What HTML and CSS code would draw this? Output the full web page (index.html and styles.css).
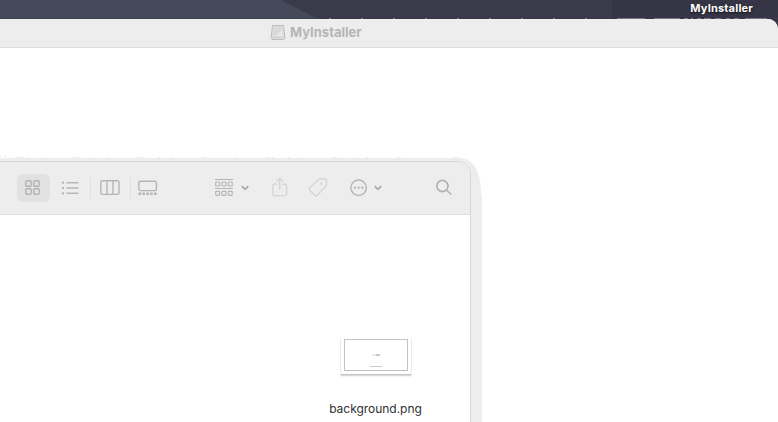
FILE: index.html
```html
<!DOCTYPE html>
<html lang="en">
<head>
<meta charset="utf-8">
<title>MyInstaller</title>
<link rel="stylesheet" href="styles.css">
</head>
<body>
<div class="desktop">
  <header class="menubar">
    <svg class="wallpaper" width="778" height="30" viewBox="0 0 778 30">
      <path d="M0 0H281L318 19V30H0Z" fill="#454a5b"/>
      <path d="M612 0H778V30H620L612 19Z" fill="#353546"/>
      <path d="M0 18.5H315" stroke="#3e4051"/>
      <path d="M329 18.5h2m30 0h2m30 0h2m30 0h2m30 0h2m30 0h2m30 0h2m30 0h2m30 0h2m30 0h28m9 0h26m4 0h4m3 0h2m4 0h4m3 0h7m4 0h6m5 0h4m4 0h5m6 0h22" stroke="#777784"/>
    </svg>
    <span class="disk-label">MyInstaller</span>
  </header>
  <main class="window">
    <div class="titlebar">
      <svg width="16" height="17" viewBox="0 0 16 17">
        <path d="M2.5 1.5H13.5L15 14.5 14 15.5H2L1 14.5Z" fill="#dedede" stroke="#bdbdbd"/>
        <path d="M3.5 2.5H12.5L13 12H3Z" fill="#d9d9d9"/>
        <path d="M6 12L12.5 5V12Z" fill="#e6e6e6"/>
        <path d="M2 13.5H14" stroke="#d0d0d0"/>
      </svg>
      <span>MyInstaller</span>
    </div>
    <svg class="halo" width="490" height="266" viewBox="0 0 490 266">
      <path d="M0 2H450L456 1L466 3Q474 7 477 14L480 24L481 34L482 44V266H0Z" fill="#ededed"/>
      <path d="M0 .5H1M4 .5H7M15 1.5h8m5 0h2m11 0h2m29 0h4m1 0h2m14 0h2m11 0h2m29 0h4m1 0h2m14 0h2m11 0h2m29 0h4m1 0h2m14 0h2m11 0h2m29 0h4m1 0h2m14 0h2m11 0h2m29 0h4m1 0h2m14 0h2m11 0h2m29 0h4" stroke="#ededed"/>
    </svg>
    <section class="finder">
      <nav class="toolbar">
        <button class="view selected" aria-label="Icons">
          <svg width="16" height="16" viewBox="0 0 16 16"><g class="line"><rect x=".8" y=".8" width="5.4" height="5.4" rx="1"/><rect x="8.8" y=".8" width="5.4" height="5.4" rx="1"/><rect x=".8" y="8.8" width="5.4" height="5.4" rx="1"/><rect x="8.8" y="8.8" width="5.4" height="5.4" rx="1"/></g></svg>
        </button>
        <svg class="list" width="17" height="28" viewBox="0 0 17 28"><path class="line" d="M4.5 8.8H16.5M4.5 14H16.5M4.5 19.2H16.5"/><path class="solid" d="M0 7.8h2v2H0zM0 13h2v2H0zM0 18.2h2v2H0z"/></svg>
        <i class="divider"></i>
        <svg class="columns" width="20" height="28" viewBox="0 0 20 28"><rect class="line" x=".8" y="6.8" width="18.2" height="13.6" rx="1.8"/><path class="line" d="M7 7V20M13 7V20"/></svg>
        <i class="divider"></i>
        <svg class="gallery" width="20" height="28" viewBox="0 0 20 28"><rect class="line" x=".8" y="7.2" width="17.6" height="9.4" rx="1.8"/><path class="solid" d="M.5 18.6h2.6V21H.5zM4.4 18.6H7V21H4.4zM8.3 18.6h2.6V21H8.3zM12.2 18.6h2.6V21h-2.6zM16.1 18.6h2.6V21h-2.6z"/></svg>
        <svg class="group" width="18" height="28" viewBox="0 0 18 28"><g class="line fine"><path d="M0 5.5H18M0 14.5H18"/><rect x=".7" y="8" width="3.9" height="4" rx=".8"/><rect x="7" y="8" width="3.9" height="4" rx=".8"/><rect x="13.3" y="8" width="3.9" height="4" rx=".8"/><rect x=".7" y="17.3" width="3.9" height="4" rx=".8"/><rect x="7" y="17.3" width="3.9" height="4" rx=".8"/><rect x="13.3" y="17.3" width="3.9" height="4" rx=".8"/></g></svg>
        <svg class="chevron" width="8" height="28" viewBox="0 0 8 28"><path d="M.8 12.2L4 15.4 7.2 12.2"/></svg>
        <svg class="share dim" width="16" height="28" viewBox="0 0 16 28"><path class="line" d="M5 10.2H2.5Q.8 10.2.8 11.8V20Q.8 21.6 2.5 21.6H13Q14.6 21.6 14.6 20V11.8Q14.6 10.2 13 10.2H10.4M7.7 16V4.8M4.5 7.5L7.7 4.3 10.9 7.5"/></svg>
        <svg class="tag dim" width="20" height="28" viewBox="0 0 20 28"><path class="line" d="M1.4 14.4L10.4 5.6Q11.4 4.8 12.8 4.8H16.4Q18.5 4.8 18.5 6.9V10.2Q18.5 11.5 17.5 12.5L9 21.6Q8 22.5 6.9 21.5L1.4 16.1Q.6 15.3 1.4 14.4Z"/><circle class="solid" cx="13.2" cy="9.7" r="1.3"/></svg>
        <svg class="more" width="18" height="28" viewBox="0 0 18 28"><circle class="line" cx="8.6" cy="13.7" r="7.7"/><g class="solid"><circle cx="5.1" cy="13.7" r="1.15"/><circle cx="8.7" cy="13.7" r="1.15"/><circle cx="12.3" cy="13.7" r="1.15"/></g></svg>
        <svg class="chevron after-more" width="8" height="28" viewBox="0 0 8 28"><path d="M.8 12.2L4 15.4 7.2 12.2"/></svg>
        <svg class="search" width="17" height="28" viewBox="0 0 17 28"><circle cx="6.4" cy="12" r="5.6"/><path d="M10.5 16L15.3 20.5"/></svg>
      </nav>
      <div class="files">
        <figure class="file">
          <svg width="74" height="44" viewBox="0 0 74 44">
            <path d="M1.5 3V41H72.5V3" fill="#fff" stroke="#ececec"/>
            <path d="M2 39.5H72" stroke="#c6c6c6"/>
            <path d="M2 40.5H72" stroke="#dadada"/>
            <rect x="5.5" y="4.5" width="63" height="31" fill="#fff" stroke="#c2c2c2"/>
            <path d="M33 20H38" stroke="#d0d0d0"/>
            <path d="M37 20H41" stroke="#999"/>
            <path d="M31 31.5H43" stroke="#c8c8c8"/>
          </svg>
          <figcaption>background.png</figcaption>
        </figure>
      </div>
    </section>
  </main>
</div>
</body>
</html>
```

FILE: styles.css
```css
* { box-sizing: border-box; }
body { margin: 0; font-family: Inter, "Liberation Sans", sans-serif; }
.desktop {
  width: 778px;
  height: 422px;
  overflow: hidden;
  display: flex;
  flex-direction: column;
  background: #393a4a;
  position: relative;
}
.menubar { height: 19px; display: flex; justify-content: flex-end; padding-right: 25px; }
.wallpaper { position: absolute; left: 0; top: 0; }
.disk-label {
  position: relative;
  font-size: 11px;
  letter-spacing: .2px;
  line-height: 17px;
  font-weight: 700;
  color: #fff;
  text-shadow: 0 1px 2px #111;
}
.window {
  position: relative;
  flex: 1;
  overflow: hidden;
  background: #fff;
  border-top-right-radius: 10px;
}
.titlebar {
  height: 29px;
  display: flex;
  align-items: center;
  gap: 4px;
  padding: 0 0 2px 270px;
  background: #ededed;
  border-bottom: 1px solid #dfdfdf;
  color: #b5b5b5;
  font-size: 13px;
  line-height: 16px;
  font-weight: 700;
}
.halo { position: absolute; left: 0; top: 137px; }
.finder {
  position: absolute;
  left: -20px;
  top: 142px;
  width: 491px;
  height: 300px;
  background: #fff;
  border: 1px solid #d5d5d5;
  border-top-right-radius: 13px;
}
.toolbar {
  height: 53px;
  display: flex;
  align-items: center;
  padding-left: 36px;
  background: #ededed;
  border-bottom: 1px solid #dedede;
  border-top-right-radius: 12px;
}
.toolbar > * { flex-shrink: 0; }
.toolbar svg { fill: none; }
.view {
  width: 33px;
  height: 28px;
  display: flex;
  align-items: center;
  padding: 0 0 0 8px;
  border: 0;
  border-radius: 6px;
}
.selected { background: #e1e1e1; }
.line { fill: none; stroke: #b5b5b5; stroke-width: 1.4; stroke-linejoin: round; }
.fine { stroke-width: 1.2; }
.solid { fill: #b5b5b5; }
.dim .line { stroke: #d5d5d5; }
.dim .solid { fill: #d5d5d5; }
.divider { width: 1px; height: 20px; background: #e0e0e0; }
.list { margin: 0 11px 0 12px; }
.columns { margin: 0 10px 0 9px; }
.gallery { margin-left: 7px; }
.group { margin-left: 57px; }
.chevron { margin-left: 8px; stroke: #a9a9a9; stroke-width: 1.7; }
.share { margin-left: 23px; }
.tag { margin-left: 20px; }
.more { margin-left: 22px; }
.after-more { margin-left: 6px; }
.search { margin-left: 54px; stroke: #b2b2b2; stroke-width: 1.7; }
.files { display: flex; padding: 120px 0 0 343px; }
.file { width: 103px; margin: 0; display: flex; flex-direction: column; align-items: center; }
.file figcaption { margin-top: 22px; font-size: 12px; letter-spacing: -.03px; line-height: 16px; color: #303030; }
```
